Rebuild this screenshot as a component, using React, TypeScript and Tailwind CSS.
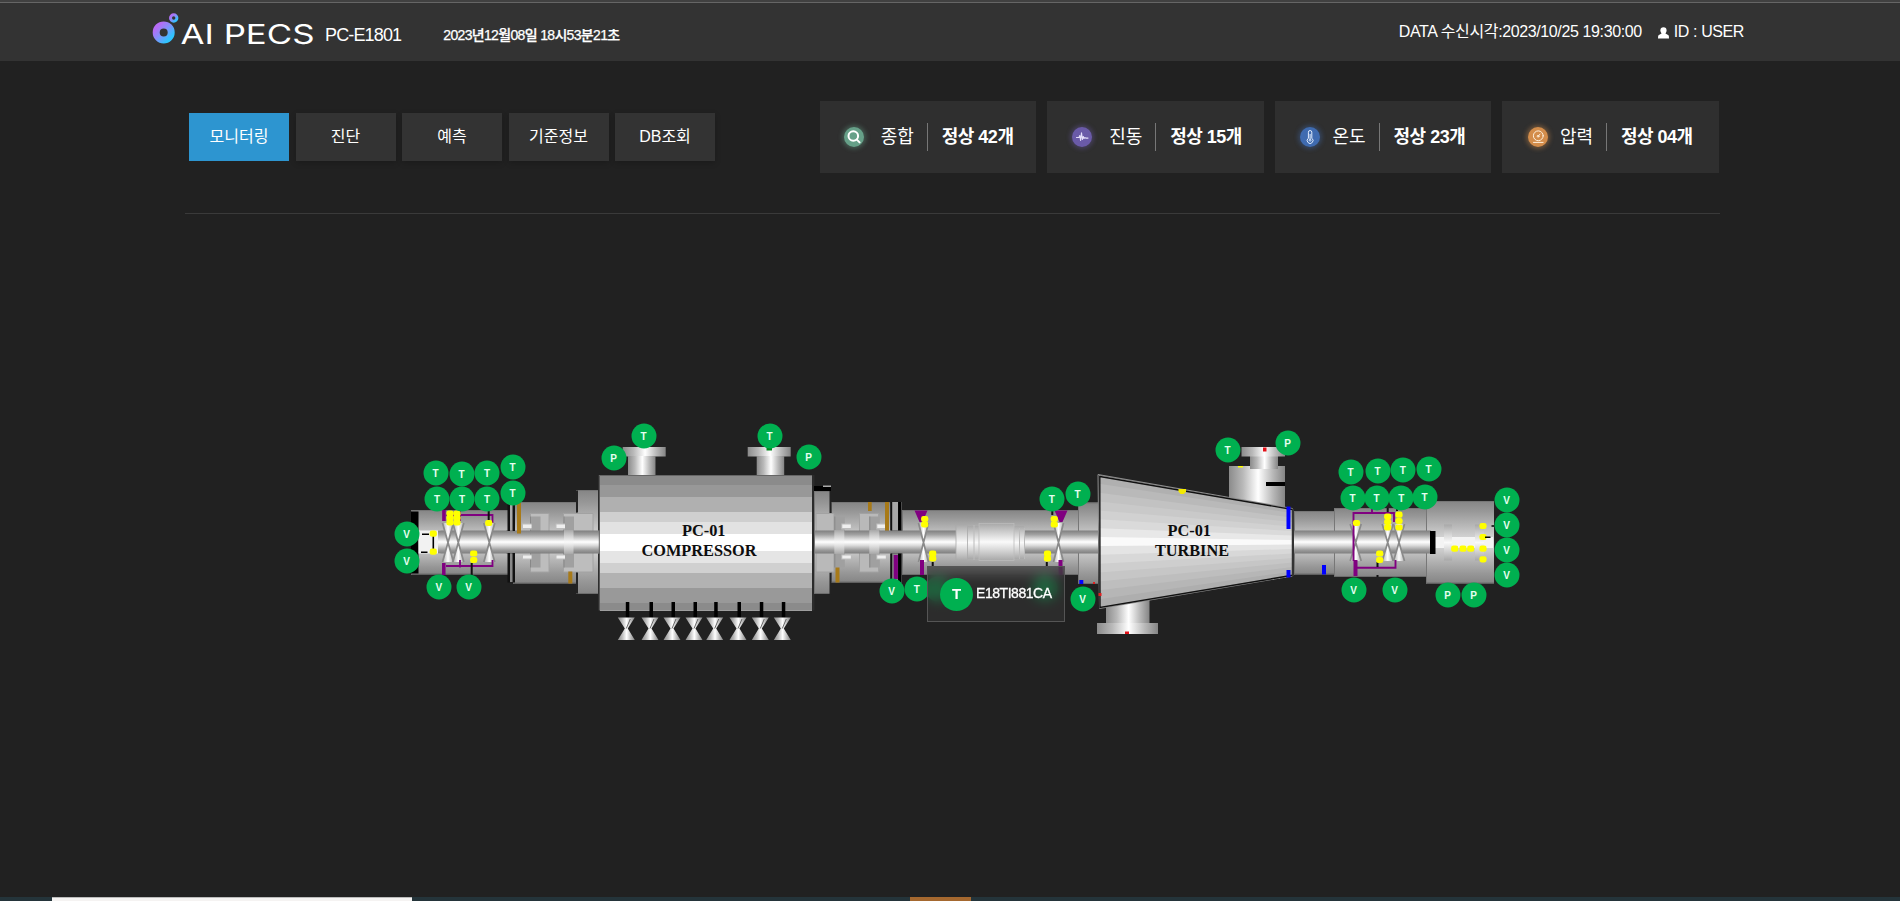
import React from "react";

type Kind = "T" | "V" | "P" | "";

const KR = "font-['Liberation_Sans','Noto_Sans_CJK_KR',sans-serif]";

const sensors: [Kind, number, number][] = [
  ["T", 435.5, 473.3], ["T", 461.5, 473.7], ["T", 487, 472.7], ["T", 512.5, 467.3],
  ["T", 437, 498.5], ["T", 462, 498.5], ["T", 487, 498.5], ["T", 512.5, 493.3],
  ["V", 406.5, 533.5], ["V", 406.5, 560.5], ["V", 438.8, 586.5], ["V", 468.5, 586.5],
  ["P", 613.7, 457.5], ["T", 643.5, 435.5], ["T", 769.5, 435.5], ["P", 808.5, 456.5],
  ["T", 1051.7, 498.5], ["T", 1077.5, 493.5], ["V", 891.5, 590.5], ["T", 916.7, 588.5],
  ["", 938, 589], ["", 1045, 588], ["V", 1082.5, 598.5], ["T", 1227.5, 449.5], ["P", 1287.5, 442.5],
  ["T", 1350.5, 471.5], ["T", 1377.5, 470.5], ["T", 1402.7, 469.5], ["T", 1428.5, 468.5],
  ["T", 1352.5, 498.3], ["T", 1376.5, 497.7], ["T", 1401.2, 497.7], ["T", 1424.5, 496.5],
  ["V", 1506.5, 499.5], ["V", 1506.5, 524.7], ["V", 1506.5, 549.5], ["V", 1506.5, 574.5],
  ["V", 1353.7, 589.7], ["V", 1394.7, 590.3], ["P", 1447.7, 594.5], ["P", 1473.5, 594.5],
];

const ORIGIN_Y = 214;

function Logo() {
  return (
    <svg width="170" height="44" viewBox="150 9 170 44" className="block shrink-0 overflow-visible">
      <defs>
        <linearGradient id="ring" x1="0" y1="0" x2="1" y2="1">
          <stop offset="0.1" stopColor="#b56cf5" />
          <stop offset="0.5" stopColor="#7f93fb" />
          <stop offset="0.9" stopColor="#2fc4ff" />
        </linearGradient>
      </defs>
      <circle cx="163.7" cy="32.4" r="7.5" fill="none" stroke="url(#ring)" strokeWidth="7" />
      <circle cx="173.7" cy="18" r="3.2" fill="none" stroke="url(#ring)" strokeWidth="3" />
      <text x="180.5" y="43.5" textLength="134" lengthAdjust="spacingAndGlyphs" fontSize="26.5" fontFamily="Inter, sans-serif" fontWeight="400" fill="#fff">
        AI PECS
      </text>
    </svg>
  );
}

const menu = ["모니터링", "진단", "예측", "기준정보", "DB조회"];

const icons = {
  search: (
    <svg viewBox="0 0 20 20" className="size-5" fill="none" stroke="#fff" strokeWidth="2" strokeLinecap="round">
      <circle cx="9.3" cy="9" r="4.8" />
      <path d="M12.8 12.6l2.800 2.800" />
    </svg>
  ),
  wave: (
    <svg viewBox="0 0 20 20" className="size-5" fill="none" stroke="#e4defa" strokeWidth="1.1" strokeLinejoin="round" strokeLinecap="round">
      <path d="M4.5 10.5H7l.8-2 .8 5L9.500 5.800l.9 6.700.9-3 .8 2 .8-1 .8.600h2.300" />
    </svg>
  ),
  thermo: (
    <svg viewBox="0 0 20 20" className="size-5" fill="none" stroke="#e3eeff" strokeWidth="1">
      <path d="M8.400 11.200V5.200a1.700 1.700 0 0 1 3.400 0v6a2.900 2.900 0 1 1-3.400 0z" />
      <path d="M10.100 7v5.500" />
      <circle cx="10.100" cy="13.300" r="0.900" />
    </svg>
  ),
  gauge: (
    <svg viewBox="0 0 20 20" className="size-5" fill="none" stroke="#fff0dc" strokeWidth="1" strokeLinecap="round">
      <circle cx="10.300" cy="8.800" r="4.900" />
      <circle cx="10.100" cy="9.200" r="0.900" />
      <path d="M10.600 8.600l1.600-1.600M5.500 15.400h9.600" />
    </svg>
  ),
};

const cards = [
  { icon: icons.search, disc: "bg-[#66a088] shadow-[0_0_4px_2px_#66a08860]", label: "종합", value: "정상 42개", pad: "pl-6", gap: "ml-[17px]" },
  { icon: icons.wave, disc: "bg-[#6a5aa8] shadow-[0_0_4px_2px_#6a5aa860]", label: "진동", value: "정상 15개", pad: "pl-[25px]", gap: "ml-[17px]" },
  { icon: icons.thermo, disc: "bg-[#3f6bb0] shadow-[0_0_4px_2px_#3f6bb060]", label: "온도", value: "정상 23개", pad: "pl-[25px]", gap: "ml-[13px]" },
  { icon: icons.gauge, disc: "bg-[#d38d4b] shadow-[0_0_4px_2px_#d38d4b60]", label: "압력", value: "정상 04개", pad: "pl-[26px]", gap: "ml-3" },
];

type Box = { x: number; y: number; w: number; h: number; fill: string };
const B = ({ x, y, w, h, fill }: Box) => <rect x={x} y={y} width={w} height={h} fill={fill} />;

/* Casing section with thin edge lines */
function Casing({ x1, x2, y1, y2 }: { x1: number; x2: number; y1: number; y2: number }) {
  return (
    <g>
      <B x={x1} y={y1} w={x2 - x1} h={y2 - y1} fill="url(#casing)" />
      <path d={`M${x1} ${y1 + 0.5}H${x2}M${x1 + 0.5} ${y1}V${y2}`} stroke="#777" fill="none" />
      <path d={`M${x1} ${y2 - 0.5}H${x2}`} stroke="#6d6d6d" />
    </g>
  );
}

function Shaft({ x1, x2 }: { x1: number; x2: number }) {
  return <B x={x1} y={530.5} w={x2 - x1} h={23} fill="url(#shaft)" />;
}

/* Journal bearing drawn as two triangles meeting at the shaft line */
function Bearing({ x, y1 = 523, y2 = 562, w = 6 }: { x: number; y1?: number; y2?: number; w?: number }) {
  const m = (y1 + y2) / 2;
  return (
    <g>
      <path d={`M${x - w + 1} ${y1}H${x + w - 1}L${x} ${m}zM${x - w + 1} ${y2}H${x + w - 1}L${x} ${m}z`} fill="url(#cone)" />
      <path d={`M${x - w + 0.5} ${y1}L${x} ${m}L${x - w + 0.5} ${y2}M${x + w - 0.5} ${y1}L${x} ${m}L${x + w - 0.5} ${y2}`} fill="none" stroke="#8a8a8a" strokeWidth="1.700" />
    </g>
  );
}

function Probe({ x, ys }: { x: number; ys: number[] }) {
  return (
    <g fill="#ff0">
      {ys.map((y) => (
        <rect key={y} x={x - 3.600} y={y - 3.100} width="7.200" height="6.200" rx="2.300" />
      ))}
    </g>
  );
}

function Seal({ x, dir }: { x: number; dir: number }) {
  return (
    <g>
      <B x={x} y={516.5} w={10.5} h={51} fill="#a0a0a0" />
      <path d={`M${x + 0.5} 516.5v51`} stroke="#888" />
      <B x={dir < 0 ? x - 8 : x + 7} y={523.5} w={9.5} h={6} fill="#bdbdbd" />
      <B x={dir < 0 ? x - 7 : x + 8} y={524.5} w={8.5} h={3.500} fill="#efefef" />
      <B x={dir < 0 ? x - 8 : x + 7} y={554.5} w={9.5} h={5} fill="#bdbdbd" />
      <B x={dir < 0 ? x - 7 : x + 8} y={555.5} w={8.5} h={3} fill="#efefef" />
    </g>
  );
}

const compressorBands: [number, string][] = [
  [475, "#8b8b8b"], [485, "#989898"], [497, "#b0b0b0"], [512, "#cfcfcf"], [522, "#e2e2e2"], [534, "#ffffff"],
  [551, "#e5e5e5"], [563, "#d0d0d0"], [573, "#b2b2b2"], [588, "#999999"], [603, "#8b8b8b"],
];

const turbineBands = [
  "#b0b0b0", "#b9b9b9", "#c2c2c2", "#c9c9c9", "#d1d1d1", "#dadada", "#e8e8e8", "#fafafa",
  "#e4e4e4", "#d8d8d8", "#cecece", "#c6c6c6", "#bebebe", "#b6b6b6", "#aeaeae",
];

const valves = [626.3, 650, 672, 694, 714.7, 738, 760.3, 782.3];

function Machine() {
  const n = turbineBands.length;
  const L = (i: number) => 475 + (133 * i) / n;
  const R = (i: number) => 508.5 + (67.5 * i) / n;
  return (
    <svg viewBox="380 420 1160 240" width="1160" height="240" className="absolute left-[380px] top-[206px]">
      <defs>
        <linearGradient id="casing" x1="0" y1="0" x2="0" y2="1">
          <stop offset="0" stopColor="#858585" /><stop offset="0.12" stopColor="#979797" />
          <stop offset="0.300" stopColor="#b8b8b8" /><stop offset="0.500" stopColor="#dedede" />
          <stop offset="0.700" stopColor="#b8b8b8" /><stop offset="0.880" stopColor="#979797" />
          <stop offset="1" stopColor="#858585" />
        </linearGradient>
        <linearGradient id="shaft" x1="0" y1="0" x2="0" y2="1">
          <stop offset="0" stopColor="#7e7e7e" /><stop offset="0.180" stopColor="#a2a2a2" />
          <stop offset="0.380" stopColor="#dedede" /><stop offset="0.500" stopColor="#fff" />
          <stop offset="0.660" stopColor="#d8d8d8" /><stop offset="0.860" stopColor="#999" />
          <stop offset="1" stopColor="#7e7e7e" />
        </linearGradient>
        <linearGradient id="pipe">
          <stop offset="0" stopColor="#8b8b8b" /><stop offset="0.250" stopColor="#b9b9b9" />
          <stop offset="0.520" stopColor="#fff" /><stop offset="0.780" stopColor="#b9b9b9" />
          <stop offset="1" stopColor="#858585" />
        </linearGradient>
        <linearGradient id="cone">
          <stop offset="0" stopColor="#b4b4b4" /><stop offset="0.500" stopColor="#fff" />
          <stop offset="1" stopColor="#b4b4b4" />
        </linearGradient>
        <linearGradient id="coupling" x1="0" y1="0" x2="0" y2="1">
          <stop offset="0" stopColor="#a8a8a8" /><stop offset="0.500" stopColor="#fafafa" /><stop offset="1" stopColor="#a8a8a8" />
        </linearGradient>
      </defs>

      {/* left bearing housing */}
      <Casing x1={411} x2={508} y1={510} y2={574.5} />
      <B x={411} y={511.5} w={7.500} h={62} fill="#000" />
      <B x={418.500} y={530.500} w={22} h={23} fill="#f2f2f2" />
      <Shaft x1={438} x2={600} />
      <path d="M433.300 534V552M422 534.300h7M421 552.200h6.500" stroke="#000" strokeWidth="1.600" />

      {/* seal section before the compressor */}
      <Casing x1={513} x2={598} y1={502} y2={583.5} />
      <Casing x1={576} x2={598} y1={490} y2={594} />
      <path d="M530.500 513.500h18.500v58.500h-18.500zM563.500 513.500h29.500v58.500h-29.500z" fill="#bdbdbd" stroke="#a2a2a2" strokeWidth="1" />
      <Seal x={530} dir={-1} />
      <Seal x={563.500} dir={-1} />
      <Shaft x1={506} x2={600} />
      <B x={564} y={530} w={9.500} h={24} fill="url(#coupling)" />
      <B x={576} y={490.500} w={2} h={22} fill="#222" />
      <B x={576} y={572.500} w={2} h={21} fill="#222" />
      {[507.500, 512.500].map((x) => (
        <g key={x}>
          <B x={x} y={504} w={2.500} h={27} fill="#111" />
          <B x={x} y={553} w={2.500} h={29.500} fill="#111" />
        </g>
      ))}
      <B x={510} y={504} w={2.500} h={26.500} fill="#aaa" />
      <B x={510} y={554} w={2.500} h={28} fill="#888" />
      <B x={517} y={502} w={4} h={31.500} fill="#a87a18" />
      <B x={568.300} y={571.500} w={4} h={12} fill="#a87a18" />

      {/* left bearing details */}
      <Bearing x={448} /><Bearing x={458.300} /><Bearing x={489.300} />
      <path d="M446 515H492.500V523M460 511v10M443.500 510.500v10.500M443.500 563.500v10.500M446 566H492.500V560M460 567.500V560" stroke="#800080" strokeWidth="1.800" fill="none" />
      <path d="M444 510v11M443.800 563v12" stroke="#800080" strokeWidth="3.500" />
      <Probe x={450} ys={[513.500, 518, 522.500]} /><Probe x={457} ys={[513.500, 518, 522.500]} />
      <path d="M488.700 511v10M471.700 563v12" stroke="#111" strokeWidth="2" />
      <Probe x={488.700} ys={[523]} /><Probe x={473.700} ys={[553.500, 560]} />
      <Probe x={433.300} ys={[533.700, 551.700]} />

      {/* compressor */}
      {[622.700, 747.700].map((x) => (
        <g key={x}>
          <B x={x} y={447} w={43} h={9.500} fill="url(#pipe)" />
          <B x={x + (x < 700 ? 5.300 : 9)} y={456} w={27.500} h={20.500} fill="url(#pipe)" />
        </g>
      ))}
      <B x={766.500} y={447} w={5.500} h={3.500} fill="#008a1e" />
      <B x={811} y={475} w={3.500} h={135.500} fill="#2b2b2b" />
      {compressorBands.map(([y, c]) => (
        <B key={y} x={600} y={y} w={212} h={610.5 - y} fill={c} />
      ))}
      <path d="M599 475.500H812M599.300 475V610.500" stroke="#666" fill="none" />
      {valves.map((x) => (
        <g key={x}>
          <B x={x - 0.500} y={602} w={3.500} h={16} fill="#000" />
          <path d={`M${x - 8.500} 617.500h17L${x + 1.500} 628.500l7 11.500h-17L${x - 1.500} 628.500z`} fill="url(#pipe)" />
          <path d={`M${x + 4} 619l-4 9.500`} stroke="#666" strokeWidth="1" />
        </g>
      ))}
      <g fontFamily="'Liberation Serif', serif" fontWeight="700" fill="#0d0d0d">
        <text x="682" y="535.700" fontSize="16" textLength="43.500" lengthAdjust="spacingAndGlyphs">PC-01</text>
        <text x="641.500" y="555.500" fontSize="16" textLength="115" lengthAdjust="spacingAndGlyphs">COMPRESSOR</text>
      </g>

      {/* seal section after the compressor */}
      <Casing x1={814} x2={831} y1={491} y2={594} />
      <B x={814} y={486} w={17} h={5} fill="#000" />
      <B x={823} y={485.500} w={8} h={1.500} fill="#aaa" />
      <Casing x1={831} x2={891} y1={502} y2={582.500} />
      <B x={829.500} y={491} w={2} h={22} fill="#222" />
      <B x={829.500} y={572.500} w={2} h={22} fill="#222" />
      <path d="M816 513.500h18v58.500h-18zM859.500 513.500h19v58.500h-19z" fill="#b9b9b9" stroke="#a2a2a2" />
      <Seal x={834.300} dir={1} /><Seal x={869.300} dir={1} />
      <B x={868} y={502} w={3.700} h={9} fill="#a87a18" />
      <B x={885} y={502} w={4} h={29} fill="#a87a18" />
      <B x={835.500} y={567.500} w={4} h={15} fill="#a87a18" />

      {/* coupling housing */}
      <Casing x1={902} x2={1078} y1={510} y2={575} />
      <Casing x1={1078} x2={1098} y1={502.500} y2={584} />
      <Shaft x1={815} x2={1098} />
      <B x={834.300} y={530} w={10} h={24} fill="url(#coupling)" />
      <B x={869.300} y={530} w={10} h={24} fill="url(#coupling)" />
      <B x={891} y={502} w={11} h={28.500} fill="#a8a8a8" />
      <B x={891} y={553.500} w={11} h={29} fill="#888" />
      <path d="M891.200 502v28.500M891.200 553.500v29" stroke="#111" strokeWidth="2" />
      <path d="M899.800 502v28.500M899.800 553.500v29" stroke="#000" strokeWidth="3.500" />
      <B x={893.700} y={555} w={4.200} h={24} fill="#800080" />
      <B x={967} y={526} w={57} h={33} fill="url(#coupling)" />
      <rect x="956" y="524.500" width="11.500" height="36" rx="1" fill="url(#coupling)" stroke="#aaa" strokeWidth=".8" />
      <rect x="979" y="523.500" width="35" height="37" fill="url(#coupling)" stroke="#bbb" strokeWidth=".8" />
      <path d="M974 525v35M1019.500 528v31M1024.500 528v31" stroke="#bbb" />
      <path d="M914.500 510.500h13l-5 11.500h-3zM1054.500 510.500h13l-5 11.500h-3z" fill="#800080" />
      <Bearing x={923.500} w={5.500} /><Bearing x={1058.500} w={5.500} />
      <B x={920} y={560} w={4} h={15} fill="#800080" />
      <B x={1058.500} y={560} w={4} h={15} fill="#800080" />
      <Probe x={924.700} ys={[519, 524.500]} /><Probe x={932.700} ys={[553.500, 558.500]} />
      <Probe x={1054.300} ys={[519, 524.500]} /><Probe x={1047.500} ys={[553.500, 558.500]} />
      <path d="M932.700 562v5M1046.800 562v5M1052.300 510v5" stroke="#111" strokeWidth="2" />
      <B x={1079.300} y={580} w={4} h={4} fill="#00f" />
      <B x={1093} y={582} w={2} h={2} fill="#e02020" />

      {/* turbine nozzles */}
      <B x={1229} y={466} w={56} h={42} fill="url(#pipe)" />
      <B x={1250} y={456} w={28} h={13} fill="url(#pipe)" />
      <B x={1241.500} y={447} w={43.500} h={9.500} fill="url(#pipe)" />
      <B x={1263} y={447.500} w={3.500} h={4} fill="#e31018" />
      <B x={1266} y={482} w={19} h={4} fill="#000" />
      <B x={1238} y={466} w={5} h={1.500} fill="#ff0" />
      <B x={1106} y={600} w={43.500} h={24} fill="url(#pipe)" />
      <B x={1097} y={623} w={61} h={11} fill="url(#pipe)" />
      <B x={1125} y={631.500} w={4} h={2.500} fill="#e31018" />

      {/* turbine body */}
      {turbineBands.map((c, i) => (
        <path key={i} d={`M1099 ${L(i)}L1292 ${R(i)}V${R(n)}L1099 ${L(n)}z`} fill={c} />
      ))}
      <path d="M1098 474.500L1292.500 508.500V576L1099.500 608.500z" fill="none" stroke="#8e8e8e" strokeWidth="1" />
      <path d="M1099.800 476.500L1292.500 509.500V575.300L1100 607.500z" fill="none" stroke="#111" strokeWidth="1.400" />
      <path d="M1178.500 489h7.500v2.500l-2 2.500h-3.500l-2-2.500z" fill="#f3ea00" />
      <B x={1286.500} y={506.500} w={4} h={22.500} fill="#00f" />
      <B x={1286.500} y={570} w={4} h={7.500} fill="#00f" />
      <B x={1098.500} y={593} w={3} h={3} fill="#e02020" />
      <g fontFamily="'Liberation Serif', serif" fontWeight="700" fill="#0d0d0d">
        <text x="1167.500" y="535.700" fontSize="16" textLength="43.500" lengthAdjust="spacingAndGlyphs">PC-01</text>
        <text x="1155" y="555.500" fontSize="16" textLength="74" lengthAdjust="spacingAndGlyphs">TURBINE</text>
      </g>

      {/* right bearing housing */}
      <Casing x1={1294} x2={1334} y1={511} y2={574.500} />
      <Casing x1={1334} x2={1426} y1={508} y2={577} />
      <Casing x1={1426} x2={1494} y1={501} y2={583.500} />
      <Shaft x1={1294} x2={1431} />
      <B x={1292} y={509} w={2} h={67} fill="#333" />
      <B x={1322} y={565} w={4} h={9.500} fill="#00f" />
      <B x={1435} y={537} w={58} h={11} fill="#f4f4f4" />
      <B x={1430} y={531} w={5.500} h={23} fill="#000" />
      <B x={1444} y={524.500} w={8} h={36} fill="url(#coupling)" />
      <B x={1475} y={524.500} w={9} h={36} fill="url(#coupling)" />
      <Bearing x={1355.700} y1={524} y2={561} /><Bearing x={1387.700} y1={524} y2={561} /><Bearing x={1399} y1={524} y2={561} />
      <path d="M1353.500 561V513H1394V522M1357 567.700H1395.500V560M1372 509v4" stroke="#800080" strokeWidth="1.900" fill="none" />
      <B x={1353.500} y={560} w={4} h={16} fill="#800080" />
      <path d="M1377.500 562v5M1377.500 575v2M1387.700 508v4M1397 508v3" stroke="#111" strokeWidth="2" />
      <Probe x={1356.500} ys={[523]} />
      <Probe x={1387.700} ys={[516.500, 522, 527.500]} /><Probe x={1399} ys={[514.700, 521, 527.500]} />
      <Probe x={1379.700} ys={[553.500, 560]} />
      <Probe x={1454.700} ys={[548.700]} /><Probe x={1463} ys={[548.700]} /><Probe x={1470.700} ys={[548.700]} />
      <Probe x={1483} ys={[526, 537, 548.700, 559.300]} />
      <path d="M1485 537.300h5.500M1491.500 526h2.500" stroke="#000" strokeWidth="1.500" />
    </svg>
  );
}

export default function App() {
  return (
    <div className={`flex h-[901px] w-[1900px] flex-col overflow-hidden bg-[#212121] text-white ${KR}`}>
      <header className="flex h-[61px] shrink-0 items-start border-t-2 border-[#414141] bg-[#333]">
        <div className="flex h-full w-full items-start border-t border-[#666] pl-[150px] pr-[156px]">
          <div className="pt-1.5">
            <Logo />
          </div>
          <h1 className="ml-[5px] mt-4 whitespace-nowrap text-[18px] leading-8 tracking-[-0.85px]">PC-E1801</h1>
          <time className="ml-[42px] mt-[14px] whitespace-nowrap text-[14px] font-medium leading-9 tracking-[-0.66px] [-webkit-text-stroke:0.25px_#fff]">2023년12월08일 18시53분21초</time>
          <div className="ml-auto mt-[11px] flex items-center whitespace-nowrap text-[16px] leading-9">
            <span className="tracking-[-0.38px]">DATA 수신시각:2023/10/25 19:30:00</span>
            <svg viewBox="0 0 11 12" className="ml-4 mt-0.5 h-3 w-[11px]" fill="#fff">
              <circle cx="5.500" cy="3.400" r="3.100" />
              <path d="M3.500 5h4v1.500l3 1.800q.5.500.5 3.200H0q0-2.700.5-3.200l3-1.800z" />
            </svg>
            <span className="ml-[5px] tracking-[-0.4px]">ID : USER</span>
          </div>
        </div>
      </header>

      <div className="ml-[185px] flex h-[153px] w-[1535px] shrink-0 items-start justify-between border-b border-[#3a3a3a] pr-[1.5px] pt-10">
        <nav className="ml-1 mt-3 flex gap-[6.5px]">
          {menu.map((m, i) => (
            <button
              key={m}
              className={`flex h-12 w-[100px] items-center justify-center text-[16px] ${i === 0 ? "bg-[#2d95d0]" : "bg-[#333] shadow-[0_2px_6px_#0003]"}`}
            >
              {m}
            </button>
          ))}
        </nav>
        <div className="flex gap-[10.8px]">
          {cards.map((c) => (
            <div key={c.label} className={`flex h-[72px] w-[216.6px] items-center whitespace-nowrap bg-[#2f2f2f] ${c.pad}`}>
              <span className={`size-5 shrink-0 rounded-full ${c.disc}`}>{c.icon}</span>
              <span className={`w-[46px] text-[18px] ${c.gap}`}>{c.label}</span>
              <span className="h-7 w-px bg-[#777]" />
              <span className="ml-3.5 text-[18px] font-bold tracking-[-0.5px]">{c.value}</span>
            </div>
          ))}
        </div>
      </div>

      <main className="relative min-h-0 flex-1">
        <Machine />
        {sensors.map(([k, x, y]) => (
          <span
            key={`${x}-${y}`}
            className="absolute flex size-[25px] -translate-x-1/2 -translate-y-1/2 items-center justify-center rounded-full bg-[#00b050] text-[10px] font-bold text-[#e6fff0]"
            style={{ left: x, top: y - ORIGIN_Y }}
          >
            {k}
          </span>
        ))}
        <div className="absolute left-[927px] top-[352px] flex h-14 w-[138px] items-center border border-[#555] bg-[#333333a0] pl-3 backdrop-blur-[6px]">
          <span className="flex size-[33px] shrink-0 items-center justify-center rounded-full bg-[#00b050] text-[15px] font-bold">T</span>
          <span className="ml-[3px] whitespace-nowrap pb-0.5 text-[14px] tracking-[-0.45px] [-webkit-text-stroke:0.3px_#fff]">E18TI881CA</span>
        </div>
      </main>

      <footer className="flex h-1 shrink-0 bg-[#24343a]">
        <div className="ml-[52px] w-[360px] border-t border-[#bbb] bg-[#f5f3f2]" />
        <div className="ml-[498px] w-[61px] bg-[#a5682f]" />
      </footer>
    </div>
  );
}
